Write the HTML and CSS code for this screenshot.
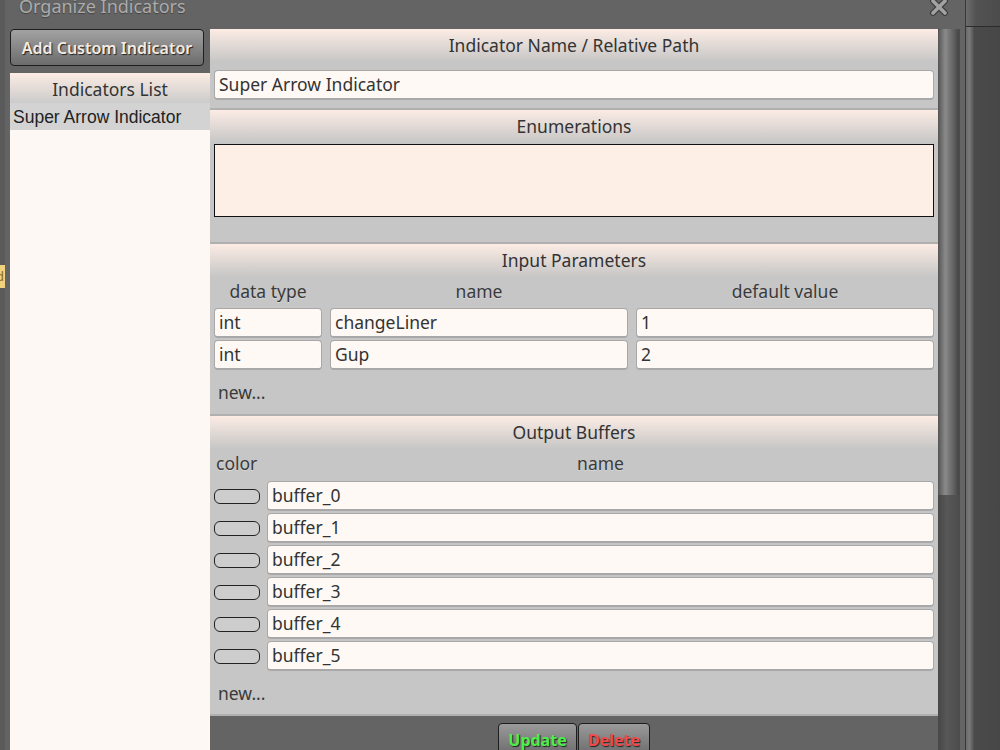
FILE: index.html
```html
<!DOCTYPE html>
<html lang="en">
<head>
    <meta charset="UTF-8">
    <meta name="viewport" content="width=device-width, initial-scale=1.0">
    <title>Organize Indicators</title>
    <link rel="stylesheet" href="styles.css">
</head>
<body>
    <div class="page-edge">
        <div class="page-tip">d</div>
    </div>

    <div class="dialog">
        <div class="titlebar">
            <span class="title">Organize Indicators</span>
            <svg class="close" width="20" height="20" viewBox="0 0 20 20">
                <path d="M4 3 L16 15 M16 3 L4 15" stroke="#3c3c3c" stroke-width="6" stroke-linecap="round"/>
                <path d="M4 3 L16 15 M16 3 L4 15" stroke="#a2a2a2" stroke-width="3.6" stroke-linecap="round"/>
            </svg>
        </div>

        <div class="dialog-body">
            <div class="sidebar">
                <button class="btn btn-add">Add Custom Indicator</button>
                <div class="list-panel">
                    <div class="list-header">Indicators List</div>
                    <div class="list-item selected">Super Arrow Indicator</div>
                </div>
            </div>

            <div class="editor">
                <div class="sections">
                    <div class="section">
                        <div class="section-header">Indicator Name / Relative Path</div>
                        <div class="section-body name-body">
                            <input class="field" type="text" value="Super Arrow Indicator">
                        </div>
                    </div>

                    <div class="section">
                        <div class="section-header">Enumerations</div>
                        <div class="section-body enum-body">
                            <textarea class="enum-area"></textarea>
                        </div>
                    </div>

                    <div class="section">
                        <div class="section-header">Input Parameters</div>
                        <div class="section-body">
                            <div class="params-grid">
                                <div class="col-label">data type</div>
                                <div class="col-label">name</div>
                                <div class="col-label">default value</div>
                                <input class="field" type="text" value="int">
                                <input class="field" type="text" value="changeLiner">
                                <input class="field" type="text" value="1">
                                <input class="field" type="text" value="int">
                                <input class="field" type="text" value="Gup">
                                <input class="field" type="text" value="2">
                            </div>
                            <div class="new-row">new...</div>
                        </div>
                    </div>

                    <div class="section">
                        <div class="section-header">Output Buffers</div>
                        <div class="section-body">
                            <div class="buffers-grid">
                                <div class="col-label left">color</div>
                                <div class="col-label">name</div>
                                <span class="swatch"></span><input class="field" type="text" value="buffer_0">
                                <span class="swatch"></span><input class="field" type="text" value="buffer_1">
                                <span class="swatch"></span><input class="field" type="text" value="buffer_2">
                                <span class="swatch"></span><input class="field" type="text" value="buffer_3">
                                <span class="swatch"></span><input class="field" type="text" value="buffer_4">
                                <span class="swatch"></span><input class="field" type="text" value="buffer_5">
                            </div>
                            <div class="new-row short">new...</div>
                        </div>
                    </div>

                    <div class="footer">
                        <button class="btn btn-update">Update</button>
                        <button class="btn btn-delete">Delete</button>
                    </div>
                </div>

                <div class="scrollbar">
                    <div class="scroll-thumb"></div>
                </div>
            </div>
        </div>
    </div>

    <div class="side-window">
        <div class="side-top"></div>
        <div class="side-rest"></div>
    </div>
</body>
</html>
```

FILE: styles.css
```css
* {
    box-sizing: border-box;
}
body {
    margin: 0;
    width: 1000px;
    height: 750px;
    overflow: hidden;
    display: flex;
    background: #474747;
    font-family: "Noto Sans", "Open Sans", sans-serif;
    font-size: 17.5px;
    color: #333;
}

/* strip of the page behind the dialog */
.page-edge {
    width: 5px;
    background: #5a5a5a;
    padding-top: 265px;
    overflow: hidden;
}
.page-tip {
    height: 23px;
    background: #f2d27c;
    color: #8a6a20;
    font-size: 13px;
    line-height: 23px;
    text-indent: -4px;
}

.dialog {
    width: 960px;
    background: #646464;
    display: flex;
    flex-direction: column;
}
.titlebar {
    height: 29px;
    display: flex;
    justify-content: space-between;
    padding: 0 16px 0 14px;
}
.title {
    font-size: 18px;
    line-height: 17px;
    margin-top: -2px;
    color: #ababab;
    text-shadow: 0 1px 1px #444;
}
.close {
    margin-top: -2px;
}

.dialog-body {
    flex: 1;
    display: flex;
    padding-left: 5px;
    padding-right: 5px;
    min-height: 0;
}

.sidebar {
    width: 200px;
    display: flex;
    flex-direction: column;
    gap: 7px;
}
.btn {
    font-family: "Noto Sans", sans-serif;
    font-weight: bold;
    border: 1px solid #1e1e1e;
    border-radius: 4px;
    background: linear-gradient(#a2a2a2, #6c6c6c);
    text-shadow: 1px 1px 1px #222;
    cursor: pointer;
    padding: 0;
}
.btn-add {
    width: 194px;
    height: 37px;
    font-size: 16px;
    font-weight: 600;
    color: #f3ebe3;
}
.list-panel {
    flex: 1;
    width: 200px;
    background: #fef8f4;
}
.list-header {
    height: 30px;
    line-height: 32px;
    text-align: center;
    background: linear-gradient(#fcece4, #cbcbcb);
}
.list-item {
    height: 27px;
    line-height: 28px;
    padding-left: 3px;
    font-family: "Liberation Sans", Arial, sans-serif;
    color: #222;
}
.list-item.selected {
    background: #d3d3d3;
}

.editor {
    flex: 1;
    display: flex;
}
.sections {
    width: 728px;
    display: flex;
    flex-direction: column;
    background: #c6c6c6;
}
.section {
    border-bottom: 2px solid #b0b0b0;
}
.section-header {
    height: 33px;
    line-height: 33px;
    text-align: center;
    background: linear-gradient(#fcece4, #c6c6c6);
}
.section-body {
    padding: 0 4px;
}
.name-body {
    padding-top: 8px;
    padding-bottom: 8px;
}
.enum-body {
    padding-top: 1px;
    padding-bottom: 25px;
}

.field {
    display: block;
    width: 100%;
    height: 30px;
    border: 1px solid #a8a8a8;
    border-bottom-width: 2px;
    border-radius: 4px;
    background: #fef9f5;
    font-family: "Noto Sans", sans-serif;
    font-size: 17.5px;
    color: #333;
    padding: 0 4px 1px;
    margin: 0;
    outline: none;
}
.enum-area {
    display: block;
    width: 100%;
    height: 73px;
    border: 1px solid #111;
    background: #fdeee6;
    resize: none;
    margin: 0;
}

.params-grid {
    display: grid;
    grid-template-columns: 108px 1fr 1fr;
    column-gap: 8px;
    row-gap: 2px;
}
.buffers-grid {
    display: grid;
    grid-template-columns: 46px 1fr;
    column-gap: 7px;
    row-gap: 2px;
    align-items: center;
}
.col-label {
    height: 29px;
    line-height: 29px;
    text-align: center;
    color: #3a3a3a;
    text-shadow: 0 1px 0 #d8d8d8;
}
.buffers-grid .col-label {
    height: 30px;
}
.col-label.left {
    text-align: left;
    padding-left: 2px;
}
.swatch {
    display: block;
    height: 15px;
    border: 1px solid #222;
    border-radius: 6px;
    background: #cdcdcd;
}
.new-row {
    height: 44px;
    line-height: 44px;
    padding-left: 4px;
    color: #3a3a3a;
}
.new-row.short {
    height: 43px;
}

.footer {
    flex: 1;
    background: #646464;
    display: flex;
    justify-content: center;
    align-items: flex-start;
    padding-top: 7px;
    gap: 1px;
}
.footer .btn {
    height: 34px;
    font-size: 16px;
    background: linear-gradient(#9a9a9a, #6a6a6a);
}
.btn-update {
    width: 79px;
    color: #4cee4c;
}
.btn-delete {
    width: 72px;
    color: #f04a4a;
}

.scrollbar {
    width: 22px;
    background: linear-gradient(to right, #474747, #575757 40%, #4c4c4c);
}
.scroll-thumb {
    height: 466px;
    width: 21px;
    border-radius: 4px 4px 0 0;
    background: linear-gradient(to right, #555, #8a8a8a 35%, #666 70%, #444);
}

/* neighbouring window on the right */
.side-window {
    flex: 1;
    display: flex;
    flex-direction: column;
    border-left: 1px solid #383838;
}
.side-top {
    height: 27px;
    background: linear-gradient(to right, #6c6c6c, #525252 30%, #4c4c4c);
    border-bottom: 1px solid #2c2c2c;
}
.side-rest {
    flex: 1;
    background: linear-gradient(to right, #6a6a6a, #7a7a7a 10%, #4a4a4a 25%, #474747);
}
```
